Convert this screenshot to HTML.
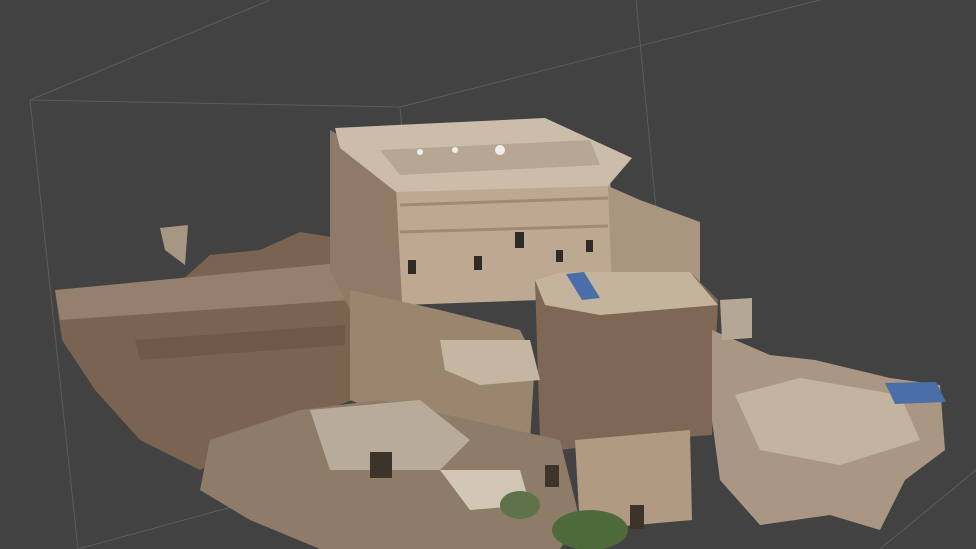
<!DOCTYPE html>
<html><head><meta charset="utf-8"><style>
html,body{margin:0;padding:0;background:#424242;width:976px;height:549px;overflow:hidden}
</style></head><body>
<svg width="976" height="549" viewBox="0 0 976 549" xmlns="http://www.w3.org/2000/svg">
<rect width="976" height="549" fill="#424242"/>
<g stroke="#5c5c5c" stroke-width="1" fill="none">
<line x1="30" y1="100" x2="400" y2="107"/>
<line x1="400" y1="107" x2="820" y2="0"/>
<line x1="30" y1="100" x2="270" y2="0"/>
<line x1="30" y1="100" x2="78" y2="549"/>
<line x1="400" y1="107" x2="402" y2="130"/>
<line x1="636" y1="0" x2="660" y2="250"/>
<line x1="880" y1="549" x2="976" y2="470"/>
<line x1="78" y1="549" x2="330" y2="480"/>
</g>
<!-- left wing -->
<polygon points="55,290 180,282 210,255 260,250 300,232 350,240 352,400 300,420 200,470 140,440 95,390 62,340" fill="#7a6350"/>
<polygon points="55,290 350,262 350,300 60,320" fill="#94806c"/>
<polygon points="135,340 345,325 345,345 140,360" fill="#6e5848"/>
<polygon points="160,228 188,225 185,265 165,250" fill="#a69684"/>
<!-- tower left side -->
<polygon points="330,130 395,165 402,305 360,330 330,270" fill="#8e7a66"/>
<!-- tower front -->
<polygon points="395,168 610,160 612,292 540,300 402,305" fill="#bda991"/>
<g fill="#2e2a26"><rect x="408" y="260" width="8" height="14"/><rect x="474" y="256" width="8" height="14"/><rect x="515" y="232" width="9" height="16"/><rect x="556" y="250" width="7" height="12"/><rect x="586" y="240" width="7" height="12"/></g>
<g stroke="#9f8a72" stroke-width="3"><line x1="400" y1="205" x2="608" y2="198"/><line x1="400" y1="232" x2="608" y2="226"/></g>
<!-- tower top -->
<polygon points="335,128 545,118 632,158 608,186 396,192 340,148" fill="#cbbda9"/>
<polygon points="380,150 590,140 600,165 400,175" fill="#b7a792"/>
<g fill="#f0eeea"><circle cx="420" cy="152" r="3"/><circle cx="500" cy="150" r="5"/><circle cx="455" cy="150" r="3"/></g>
<!-- right tower side -->
<polygon points="608,186 640,200 700,222 700,290 640,282 612,292" fill="#a99680"/>
<!-- center block -->
<polygon points="535,280 560,272 690,272 718,300 712,435 640,440 560,450 540,440" fill="#7f6756"/>
<polygon points="535,280 560,272 690,272 718,305 600,315 545,305" fill="#c4b39d"/>
<polygon points="575,440 690,430 692,520 580,530" fill="#b09a82"/>
<!-- middle -->
<polygon points="350,290 440,310 520,330 535,360 530,440 480,430 400,420 350,400" fill="#9a866f"/>
<polygon points="440,340 530,340 540,380 480,385 445,370" fill="#c5b6a2"/>
<!-- right wing -->
<polygon points="712,330 770,355 815,360 890,378 940,385 945,450 905,480 880,530 830,515 760,525 720,480 712,420" fill="#a99784"/>
<polygon points="735,395 800,378 900,395 920,440 840,465 760,450" fill="#c3b4a0"/>
<polygon points="720,300 752,298 752,338 722,340" fill="#b4a796"/>
<!-- lower rubble -->
<polygon points="210,440 300,410 380,400 470,420 560,440 580,520 560,549 320,549 250,520 200,490" fill="#8e7b68"/>
<polygon points="310,410 420,400 470,440 440,470 330,470" fill="#b8ab9b"/>
<polygon points="440,470 520,470 530,505 470,510" fill="#d2c6b6"/>
<g fill="#3c332b"><rect x="370" y="452" width="22" height="26"/><rect x="630" y="505" width="14" height="24"/><rect x="545" y="465" width="14" height="22"/></g>
<ellipse cx="590" cy="530" rx="38" ry="20" fill="#4e6a3a"/>
<ellipse cx="520" cy="505" rx="20" ry="14" fill="#5e7349"/>
<!-- solar panels -->
<polygon points="566,274 584,272 600,298 582,300" fill="#4a6fa8"/>
<polygon points="885,383 936,382 946,402 895,404" fill="#4a6fa8"/>
</svg>
</body></html>
